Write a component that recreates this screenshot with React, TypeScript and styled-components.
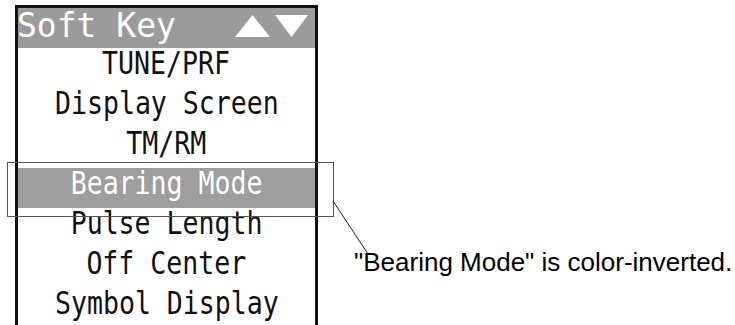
import React from 'react';
import styled, { createGlobalStyle } from 'styled-components';

const items = [
  'TUNE/PRF',
  'Display Screen',
  'TM/RM',
  'Bearing Mode',
  'Pulse Length',
  'Off Center',
  'Symbol Display',
];

const INVERTED = 'Bearing Mode';

export default function App() {
  return (
    <>
      <GlobalStyle />
      <Page>
        <Panel>
          <Header>
            <HeaderTitle>Soft Key</HeaderTitle>
            <Arrows>
              <svg width="35" height="22" viewBox="0 0 35 22">
                <polygon points="17.5,0 35,22 0,22" fill="#fff" />
              </svg>
              <svg width="33" height="22" viewBox="0 0 33 22">
                <polygon points="0,0 33,0 16.5,22" fill="#fff" />
              </svg>
            </Arrows>
          </Header>
          {items.map((item) => (
            <Row key={item} $inverted={item === INVERTED}>
              <RowLabel>{item}</RowLabel>
            </Row>
          ))}
          <Callout />
        </Panel>
        <Caption>"Bearing Mode" is color-inverted.</Caption>
        <Leader width="735" height="325" viewBox="0 0 735 325">
          <line x1="333" y1="201" x2="368" y2="254" stroke="#222" strokeWidth="1" />
        </Leader>
      </Page>
    </>
  );
}

const GlobalStyle = createGlobalStyle`
  html, body {
    margin: 0;
    padding: 0;
    background: #fff;
    overflow: hidden;
  }
`;

const Page = styled.div`
  position: relative;
  display: flex;
  align-items: flex-start;
  width: 735px;
  height: 325px;
  padding: 5px 0 0 15px;
  box-sizing: border-box;
  overflow: hidden;
`;

const Panel = styled.section`
  position: relative;
  flex-shrink: 0;
  width: 303px;
  box-sizing: border-box;
  border: 3px solid #111;
  border-bottom: none;
  font-family: "DejaVu Sans Mono", "Liberation Mono", monospace;
`;

const Header = styled.header`
  display: flex;
  align-items: flex-start;
  justify-content: space-between;
  height: 40px;
  background: #9b9b9b;
  padding-right: 7px;
`;

const HeaderTitle = styled.h1`
  margin: 0 0 0 -1px;
  font-size: 33px;
  font-weight: normal;
  line-height: 36px;
  color: #fff;
  white-space: nowrap;
`;

const Arrows = styled.div`
  display: flex;
  gap: 5px;
  margin-top: 7px;
`;

const Row = styled.div<{ $inverted?: boolean }>`
  height: 40px;
  box-sizing: border-box;
  padding-bottom: 10px;
  line-height: 30px;
  text-align: center;
  font-size: 32px;
  white-space: nowrap;
  background: ${({ $inverted }) => ($inverted ? '#9e9e9e' : 'transparent')};
  color: ${({ $inverted }) => ($inverted ? '#fff' : '#111')};
`;

const RowLabel = styled.span`
  display: inline-block;
  transform: scaleX(0.83);
  transform-origin: center;
`;

const Callout = styled.div`
  position: absolute;
  left: -11px;
  top: 154px;
  width: 327px;
  height: 55px;
  box-sizing: border-box;
  border: 1.5px solid #555;
  pointer-events: none;
`;

const Caption = styled.p`
  margin: 242px 0 0 36px;
  font-family: "Liberation Sans", Arial, sans-serif;
  font-size: 26px;
  line-height: 30px;
  color: #000;
  white-space: nowrap;
`;

const Leader = styled.svg`
  position: absolute;
  left: 0;
  top: 0;
  pointer-events: none;
`;
